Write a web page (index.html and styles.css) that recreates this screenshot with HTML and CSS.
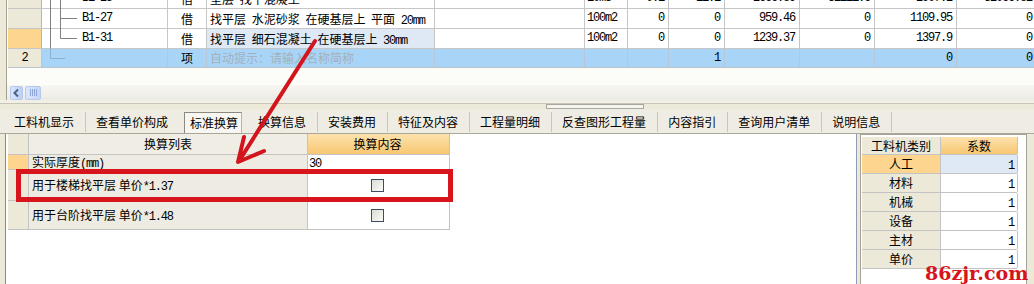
FILE: index.html
```html
<!DOCTYPE html>
<html lang="zh">
<head>
<meta charset="utf-8">
<title>标准换算</title>
<link rel="stylesheet" href="styles.css">
</head>
<body>
<div class="app">
  <section class="upper">
    <div class="grid">
      <div class="rows">
        <div class="row">
          <div class="c rn"></div>
          <div class="c code m">B1-25</div>
          <div class="c typ">借</div>
          <div class="c name">垫层 找平混凝土</div>
          <div class="c blank"></div>
          <div class="c unit m">10m3</div>
          <div class="c n1 r m">0.1</div>
          <div class="c n2 r m">11.1</div>
          <div class="c n3 r m">2666.89</div>
          <div class="c n4 r m">31111.6</div>
          <div class="c n5 r m">2907.2</div>
          <div class="c n6 r m">32066.82</div>
        </div>
        <div class="row">
          <div class="c rn"></div>
          <div class="c code m">B1-27</div>
          <div class="c typ">借</div>
          <div class="c name">找平层 水泥砂浆 在硬基层上 平面 <span class="m">20mm</span></div>
          <div class="c blank"></div>
          <div class="c unit m">100m2</div>
          <div class="c n1 r m">0</div>
          <div class="c n2 r m">0</div>
          <div class="c n3 r m">959.46</div>
          <div class="c n4 r m">0</div>
          <div class="c n5 r m">1109.95</div>
          <div class="c n6 r m">0</div>
        </div>
        <div class="row">
          <div class="c rn sel"></div>
          <div class="c code m">B1-31</div>
          <div class="c typ">借</div>
          <div class="c name cur">找平层 细石混凝土 在硬基层上 <span class="m">30mm</span></div>
          <div class="c blank"></div>
          <div class="c unit m">100m2</div>
          <div class="c n1 r m">0</div>
          <div class="c n2 r m">0</div>
          <div class="c n3 r m">1239.37</div>
          <div class="c n4 r m">0</div>
          <div class="c n5 r m">1397.9</div>
          <div class="c n6 r m">0</div>
        </div>
        <div class="row active">
          <div class="c rn m">2</div>
          <div class="c code"></div>
          <div class="c typ">项</div>
          <div class="c name hint">自动提示：请输入名称简称</div>
          <div class="c blank"></div>
          <div class="c unit"></div>
          <div class="c n1"></div>
          <div class="c n2 r m">1</div>
          <div class="c n3"></div>
          <div class="c n4"></div>
          <div class="c n5 r m">0</div>
          <div class="c n6 r m">0</div>
        </div>
      </div>
    </div>
    <svg class="tree" width="90" height="85" viewBox="0 0 90 85">
      <path d="M43.5 0V48M53.5 0V38.5M53.5 18.5H70M53.5 38.5H70" stroke="#808080" stroke-width="1" fill="none"/>
      <path d="M43.5 48V58.5H58" stroke="#8fb0cc" stroke-width="1" fill="none"/>
    </svg>
    <div class="hscroll">
      <span class="sbtn">
        <svg width="11" height="12" viewBox="0 0 11 12"><path d="M7 2.5L3.5 6L7 9.5" stroke="#4d6185" stroke-width="2" fill="none"/></svg>
      </span>
      <span class="thumb"><i></i><i></i><i></i><i></i></span>
    </div>
  </section>

  <div class="splitter"><span class="grip"></span></div>

  <nav class="tabs">
    <span class="tab">工料机显示</span>
    <span class="tab pre">查看单价构成</span>
    <span class="tab on"><span class="box">标准换算</span></span>
    <span class="tab">换算信息</span>
    <span class="tab">安装费用</span>
    <span class="tab">特征及内容</span>
    <span class="tab">工程量明细</span>
    <span class="tab">反查图形工程量</span>
    <span class="tab">内容指引</span>
    <span class="tab">查询用户清单</span>
    <span class="tab">说明信息</span>
  </nav>

  <section class="lower">
    <div class="pl">
      <div class="conv">
        <div class="crow head">
          <div class="k rh"></div>
          <div class="k lab ctr">换算列表</div>
          <div class="k val ctr hot">换算内容</div>
        </div>
        <div class="crow r1">
          <div class="k rh sel"></div>
          <div class="k lab">实际厚度<span class="m">(mm)</span></div>
          <div class="k val"><span class="m">30</span></div>
        </div>
        <div class="crow r2">
          <div class="k rh"></div>
          <div class="k lab">用于楼梯找平层 单价<span class="m">*1.37</span></div>
          <div class="k val ctr"><span class="cb"></span></div>
        </div>
        <div class="crow r3">
          <div class="k rh"></div>
          <div class="k lab">用于台阶找平层 单价<span class="m">*1.48</span></div>
          <div class="k val ctr"><span class="cb"></span></div>
        </div>
      </div>
    </div>
    <div class="pr">
      <div class="coef">
        <div class="frow head">
          <div class="f cat">工料机类别</div>
          <div class="f num hot">系数</div>
        </div>
        <div class="frow">
          <div class="f cat sel">人工</div>
          <div class="f num cur"><span class="m">1</span></div>
        </div>
        <div class="frow">
          <div class="f cat">材料</div>
          <div class="f num"><span class="m">1</span></div>
        </div>
        <div class="frow">
          <div class="f cat">机械</div>
          <div class="f num"><span class="m">1</span></div>
        </div>
        <div class="frow">
          <div class="f cat">设备</div>
          <div class="f num"><span class="m">1</span></div>
        </div>
        <div class="frow">
          <div class="f cat">主材</div>
          <div class="f num"><span class="m">1</span></div>
        </div>
        <div class="frow">
          <div class="f cat">单价</div>
          <div class="f num"><span class="m">1</span></div>
        </div>
      </div>
    </div>
  </section>

  <div class="highlight"></div>
  <svg class="arrow" width="1034" height="284" viewBox="0 0 1034 284">
    <path d="M315 41L239 161M244 137L238 162L264 151" stroke="#d4141c" stroke-width="4" stroke-linecap="round" stroke-linejoin="round" fill="none"/>
  </svg>
  <div class="watermark">86zjr.com</div>
</div>
</body>
</html>
```
FILE: styles.css
```css
* { box-sizing: border-box; }
html, body { margin: 0; padding: 0; overflow: hidden; }
body {
  width: 1034px;
  height: 284px;
  background: #ece9d8;
  font-family: "Noto Sans CJK SC", sans-serif;
  font-size: 12px;
  color: #000;
}
.app { position: relative; width: 1034px; height: 284px; overflow: hidden; }

.m {
  font-family: "Liberation Mono", monospace;
  font-size: 12px;
  letter-spacing: -1.2px;
}

/* ---------- upper grid ---------- */
.upper {
  position: relative;
  height: 100px;
  margin-left: 6px;
  border-left: 1px solid #a5a294;
  background: #fcfcf8;
  display: flex;
  flex-direction: column;
  overflow: hidden;
}
.grid { height: 85px; padding-left: 1px; overflow: hidden; flex: none; }
.rows { margin-top: -11px; width: 1100px; }
.row { display: flex; height: 20px; border-bottom: 1px solid #c6c6c6; background: #fff; }
.row.active { height: 19px; background: #a8d5f7; border-bottom-color: #b9c4cc; }
.c {
  flex: none;
  height: 100%;
  border-right: 1px solid #c6c6c6;
  display: block;
  line-height: 19px;
  padding: 0 3px;
  white-space: nowrap;
  overflow: hidden;
}
.row.active .c { border-right-color: #b7c7d6; line-height: 18px; }
.rn { width: 34px; background: #ece9d8; text-align: center; border-right-color: #b9b6a8; }
.row.active .rn { background: #ece9d8; }
.rn.sel { background: #fdd58e; }
.code { width: 126px; padding-left: 40px; }
.typ { width: 39px; text-align: center; }
.name { width: 228px; word-spacing: 3px; }
.name .m { word-spacing: 0; }
.name.cur { background: #dfe8f5; }
.name.hint { color: #a4b0ba; word-spacing: 0; }
.blank { width: 150px; }
.unit { width: 43px; padding-left: 2px; }
.n1 { width: 41px; }
.n2 { width: 56px; }
.n3 { width: 75px; }
.n4 { width: 75px; }
.n5 { width: 82px; }
.n6 { width: 80px; }
.c.r { text-align: right; padding-right: 4px; }

.tree { position: absolute; left: 0; top: 0; pointer-events: none; }

.hscroll {
  height: 15px;
  flex: none;
  display: flex;
  align-items: center;
  padding-left: 3px;
  background: linear-gradient(#f7f6f1, #ecebe3);
}
.sbtn {
  width: 13px;
  height: 14px;
  border: 1px solid #b6c8ee;
  border-radius: 2px;
  background: linear-gradient(90deg, #dbe6fc, #bccff5);
  display: flex;
  align-items: center;
  justify-content: center;
}
.thumb {
  width: 16px;
  height: 14px;
  margin-left: 2px;
  border: 1px solid #b6c8ee;
  border-radius: 2px;
  background: linear-gradient(90deg, #dbe6fc, #c4d5f7);
  display: flex;
  align-items: center;
  justify-content: center;
  gap: 1px;
}
.thumb i { display: block; width: 1px; height: 7px; background: #8ea6d6; }

/* ---------- splitter ---------- */
.splitter {
  height: 9px;
  background: linear-gradient(#f1efe6 0 3px, #c8c5b8 3px 4px, #ece9d8 4px);
  padding-top: 4px;
}
.grip {
  display: block;
  width: 98px;
  height: 5px;
  margin-left: 546px;
  border: 1px solid #a9a79c;
  background: #f5f4ef;
}

/* ---------- tabs ---------- */
.tabs {
  height: 25px;
  display: flex;
  align-items: flex-end;
  padding-left: 4px;
  background: #efede3;
  border-bottom: 1px solid #a9a69a;
}
.tab {
  height: 20px;
  padding: 0 11px 0 10px;
  border-right: 1px solid #c9c6b7;
  display: flex;
  align-items: center;
  white-space: nowrap;
  line-height: 1;
  position: relative;
  top: -1px;
}
.tab.pre { border-right-color: transparent; }
.tab.on {
  padding: 0 5px 0 4px;
  border-right-color: transparent;
  height: 21px;
  top: 0;
  align-items: stretch;
}
.tab.on .box {
  display: flex;
  align-items: center;
  padding: 0 3px 0 5px;
  border: 1px solid #8c8a80;
  border-bottom: none;
  border-right-color: #b8b5a8;
  background: #f7f6f0;
}

/* ---------- lower ---------- */
.lower { height: 150px; display: flex; padding-left: 5px; }
.pl {
  width: 852px;
  height: 150px;
  border-left: 1px solid #8d8b80;
  border-right: 1px solid #8e9cb8;
  background: #fff;
  padding-left: 2px;
}
.conv { width: 442px; }
.crow { display: flex; border-bottom: 1px solid #c3c3c3; }
.crow.head { height: 21px; line-height: 20px; }
.crow.r1 { height: 15px; line-height: 14px; }
.crow.r2 { height: 31px; line-height: 30px; }
.crow.r3 { height: 29px; line-height: 28px; }
.k {
  flex: none;
  height: 100%;
  border-right: 1px solid #c3c3c3;
  display: block;
  padding: 0 3px;
  white-space: nowrap;
}
.rh { width: 21px; background: #ece9d8; }
.rh.sel { background: #fdd58e; }
.lab { width: 279px; background: #eeece2; }
.val { width: 142px; background: #fff; padding-left: 1px; }
.head .lab { background: #efede4; }
.k.ctr { text-align: center; }
.hot { background: linear-gradient(#fde2ad, #f7c772); }
.head .k.hot { background: linear-gradient(#fde2ad, #f7c772); }
.cb {
  display: inline-block;
  vertical-align: middle;
  width: 13px;
  height: 13px;
  margin-top: -2px;
  border: 1px solid #3b4d60;
  background: linear-gradient(135deg, #dcdcd4, #fbfbf9);
}

.pr {
  width: 167px;
  height: 150px;
  margin-left: 3px;
  border-left: 1px solid #a5a397;
  border-right: 1px solid #a5a397;
  border-top: 1px solid #a5a397;
  background: #fff;
  padding: 2px 0 0 1px;
}
.coef { width: 155px; }
.frow { display: flex; height: 19px; border-bottom: 1px solid #c3c3c3; line-height: 18px; }
.frow.head { height: 18px; line-height: 17px; }
.f {
  flex: none;
  height: 100%;
  border-right: 1px solid #c3c3c3;
  display: block;
  padding: 0 3px;
}
.cat { width: 79px; background: #ece9d8; text-align: center; }
.cat.sel { background: #fdd58e; }
.num { width: 77px; text-align: right; padding-right: 3px; }
.num.cur { background: #dfe8f5; }
.head .num { text-align: center; }

/* ---------- overlays ---------- */
.highlight {
  position: absolute;
  left: 16px;
  top: 169px;
  width: 437px;
  height: 33px;
  border: 5px solid #d8151d;
}
.arrow { position: absolute; left: 0; top: 0; pointer-events: none; }
.watermark {
  position: absolute;
  left: 925px;
  top: 261px;
  font-family: "DejaVu Serif", serif;
  font-size: 19px;
  font-weight: bold;
  color: #d6141c;
  line-height: 24px;
  white-space: nowrap;
}
```
